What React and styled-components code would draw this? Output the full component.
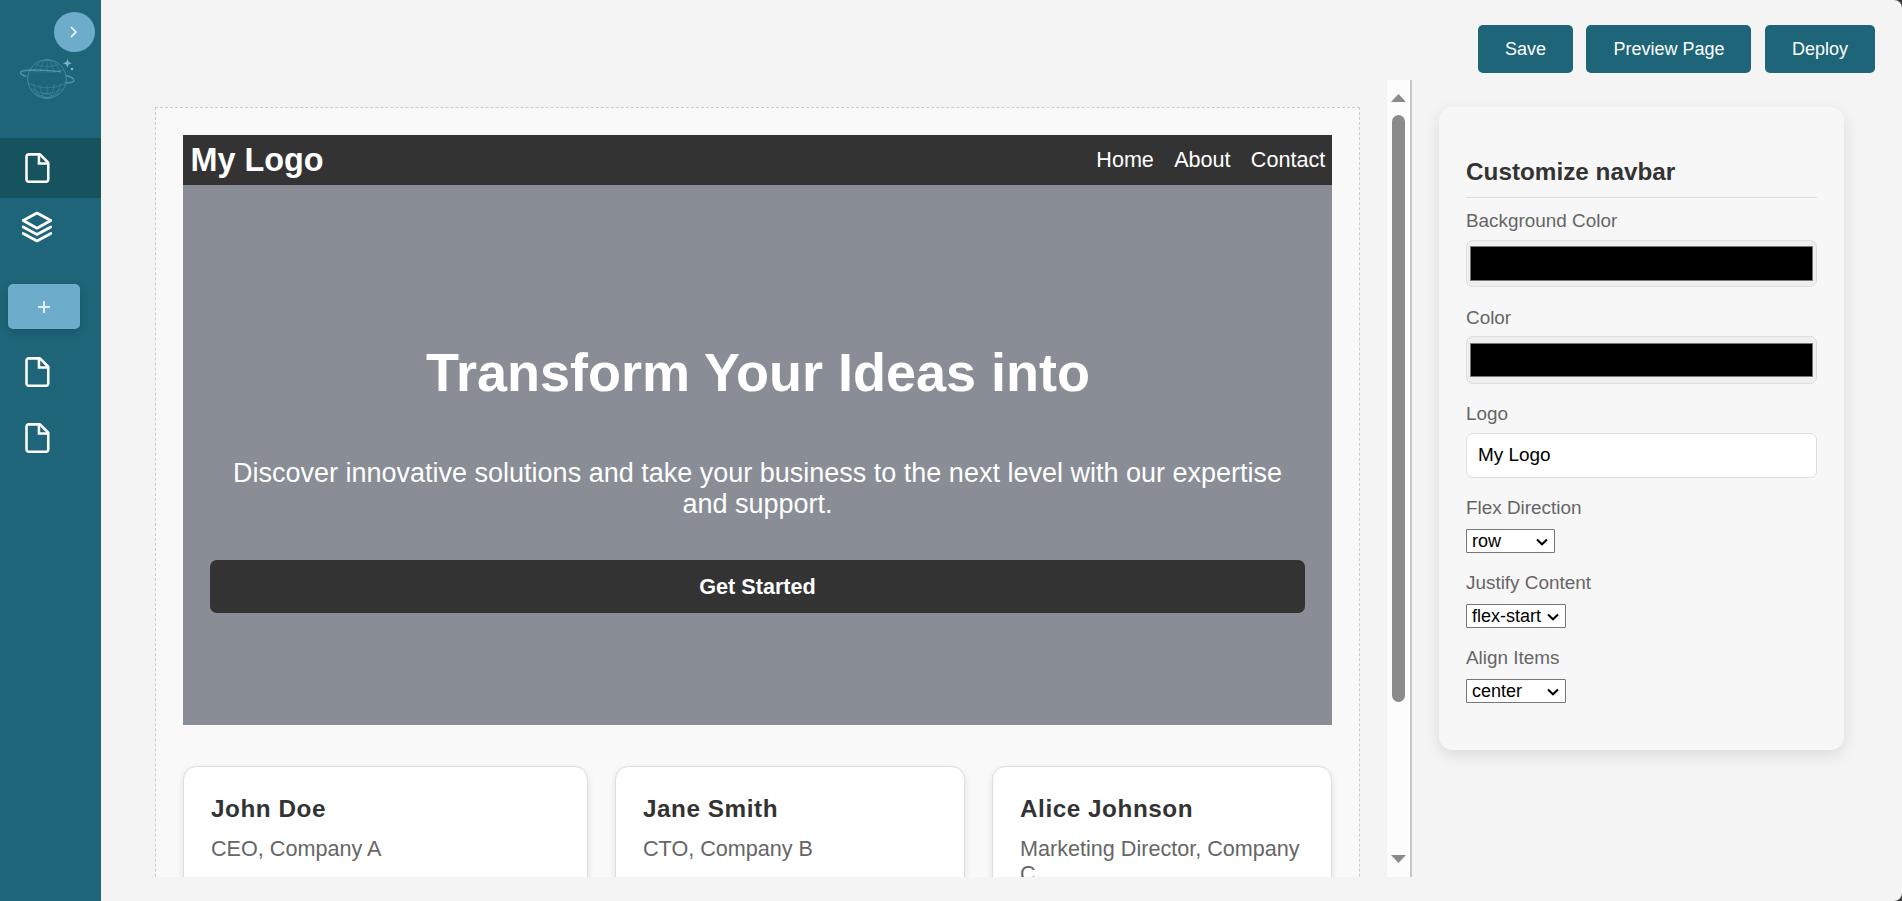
import React from 'react';
import styled, { createGlobalStyle } from 'styled-components';

const Global = createGlobalStyle`
  * { box-sizing: border-box; }
  html, body { margin: 0; height: 100%; background: #3b3b3b; }
  body, button, input { font-family: "Liberation Sans", Arial, sans-serif; }
  h1, h2, h3, p { margin: 0; }
`;

const Page = styled.div`
  display: flex;
  width: 100%;
  height: 901px;
  overflow: hidden;
  background: #f4f4f4;
  border-radius: 0 8px 8px 0;
`;

const Sidebar = styled.aside`
  display: flex;
  flex-direction: column;
  flex: none;
  width: 101px;
  background: #1e6579;
`;

const SidebarTop = styled.div`
  height: 138px;
  padding: 12px 6px 0 0;
`;

const Toggle = styled.button`
  display: flex;
  align-items: center;
  justify-content: center;
  width: 41px;
  height: 40px;
  margin: 0 0 0 auto;
  padding: 0 1px 0 0;
  border: 0;
  border-radius: 50%;
  background: #6dadcb;
`;

const Brand = styled.svg`
  display: block;
  width: 60px;
  height: 50px;
  margin: 2px 0 0 18px;
`;

const SideItem = styled.div`
  display: flex;
  align-items: center;
  height: ${(p) => p.$height}px;
  padding: 0 0 ${(p) => (p.$active ? 0 : 2)}px 19px;
  background: ${(p) => (p.$active ? '#17525f' : 'transparent')};
`;

const Icon = styled.svg`
  display: block;
  width: ${(p) => p.$size}px;
  height: ${(p) => p.$size}px;
  fill: none;
  stroke: #fff;
  stroke-width: ${(p) => p.$weight || 2};
  stroke-linecap: round;
  stroke-linejoin: round;
`;

const AddButton = styled.button`
  display: flex;
  align-items: center;
  justify-content: center;
  width: 72px;
  height: 45px;
  margin: 26px 0 11px 8px;
  padding: 1px 0 0;
  border: 0;
  border-radius: 5px;
  background: #6dadcb;
  box-shadow: 0 4px 8px rgba(0, 0, 0, 0.15);
`;

const Main = styled.main`
  display: flex;
  flex-direction: column;
  flex: 1;
  min-width: 0;
`;

const Toolbar = styled.header`
  display: flex;
  justify-content: flex-end;
  gap: 13.5px;
  height: 80px;
  padding: 25px 27px 0 0;
`;

const ActionButton = styled.button`
  height: 48px;
  padding: 1px 27px 0;
  border: 0;
  border-radius: 5px;
  background: #1e6579;
  color: #fff;
  font-size: 18px;
`;

const Workspace = styled.div`
  display: flex;
  align-items: flex-start;
  height: 797px;
`;

const Editor = styled.section`
  display: flex;
  width: 1311px;
  height: 797px;
  overflow: hidden;
  border-right: 2px solid #c8c8c8;
`;

const Viewport = styled.div`
  flex: 1;
  height: 797px;
  padding: 27px 27px 0 54px;
  overflow: hidden;
`;

const Canvas = styled.div`
  height: 900px;
  padding: 27px;
  border: 1px dashed #ccc;
  background: #f9f9f9;
`;

const Navbar = styled.nav`
  display: flex;
  align-items: center;
  justify-content: space-between;
  height: 50px;
  padding: 0 6.75px 0 7.5px;
  background: #333;
  color: #fff;
`;

const NavLogo = styled.div`
  font-size: 32.4px;
  font-weight: 700;
`;

const NavLinks = styled.div`
  display: flex;
  gap: 20.25px;
  font-size: 21.6px;
`;

const Hero = styled.div`
  display: flex;
  flex-direction: column;
  height: 540px;
  padding: 156px 27px 0;
  background: #898d95;
  color: #fff;
  text-align: center;
`;

const HeroTitle = styled.h1`
  padding-left: 1px;
  font-size: 54px;
  line-height: 62px;
`;

const HeroText = styled.p`
  margin: 55px 0 40px;
  font-size: 27px;
  line-height: 31px;
`;

const HeroButton = styled.button`
  height: 53px;
  padding: 0;
  border: 0;
  border-radius: 6.75px;
  background: #333;
  color: #fff;
  font-size: 21.6px;
  font-weight: 700;
`;

const Cards = styled.div`
  display: grid;
  grid-template-columns: 405px 350px 1fr;
  gap: 27px;
  margin-top: 41px;
`;

const Card = styled.article`
  height: 180px;
  padding: 28px 27px 0;
  border: 1px solid #ddd;
  border-radius: 13.5px;
  background: #fff;
  box-shadow: 0 3px 7px rgba(0, 0, 0, 0.1);
`;

const CardName = styled.h3`
  color: #333;
  font-size: 24.3px;
  line-height: 28px;
  letter-spacing: 0.54px;
`;

const CardRole = styled.p`
  margin-top: 13px;
  color: #666;
  font-size: 21.6px;
  line-height: 25px;
`;

const Scrollbar = styled.div`
  display: flex;
  flex-direction: column;
  align-items: center;
  justify-content: space-between;
  width: 23px;
  padding: 14px 0;
  background: #fcfcfc;
`;

const ScrollTrack = styled.div`
  flex: 1;
  padding-top: 13px;
`;

const ScrollThumb = styled.div`
  width: 13px;
  height: 587px;
  border-radius: 7px;
  background: #8b8b8b;
`;

const Arrow = styled.svg`
  display: block;
  width: 15px;
  height: 8px;
  fill: #8b8b8b;
`;

const Panel = styled.aside`
  width: 405px;
  height: 643px;
  margin: 27px 0 0 27px;
  padding: 49px 27px 0;
  border-radius: 13.5px;
  background: #f7f7f7;
  box-shadow: 0 5px 16px rgba(0, 0, 0, 0.1);
`;

const PanelTitle = styled.h2`
  height: 42px;
  margin-bottom: 12px;
  border-bottom: 1px solid #ddd;
  color: #333;
  font-size: 24.3px;
  line-height: 31px;
`;

const Field = styled.div`
  display: flex;
  flex-direction: column;
  align-items: flex-start;
  height: ${(p) => p.$height}px;
`;

const Label = styled.label`
  height: ${(p) => p.$height}px;
  color: #666;
  font-size: 18.9px;
  line-height: 22px;
`;

const ColorInput = styled.div`
  display: flex;
  width: 100%;
  height: ${(p) => p.$height}px;
  padding: ${(p) => p.$inset}px 3px;
  border: 1px solid #ddd;
  border-radius: 6.75px;
  background: #efefef;
`;

const Swatch = styled.div`
  flex: 1;
  border: 1px solid #777;
  background: #000;
`;

const TextInput = styled.input`
  width: 100%;
  height: 45px;
  padding: 0 11px 2px;
  border: 1px solid #ddd;
  border-radius: 6.75px;
  background: #fff;
  color: #000;
  font-size: 18.9px;
`;

const Select = styled.div`
  display: flex;
  align-items: center;
  justify-content: space-between;
  width: ${(p) => p.$width}px;
  height: 24px;
  padding: 0 6px 0 5px;
  border: 1px solid #767676;
  border-radius: 1px;
  background: #fff;
  color: #000;
  font-size: 18px;
  line-height: 22px;
`;

const Chevron = styled.svg`
  width: 12px;
  height: 8px;
  margin-top: 2px;
  fill: none;
  stroke: #000;
  stroke-width: 2;
`;

const FileIcon = () => (
  <Icon $size={36} $weight={1.7} viewBox="0 0 24 24">
    <path d="M14 2.9H6.5A1.5 1.5 0 0 0 5 4.4V19.6A1.5 1.5 0 0 0 6.5 21.1H18A1.5 1.5 0 0 0 19.5 19.6V8.5Z" />
    <path d="M13.3 3V9H19.2" strokeLinejoin="miter" />
  </Icon>
);

const LayersIcon = () => (
  <Icon $size={36} $weight={1.8} viewBox="0 0 24 24">
    <path d="M12 2.7 21.2 7.7 12 12.8 2.8 7.7Z" />
    <path d="M2.8 12 12 17 21.2 12" />
    <path d="M2.8 16.3 12 21.3 21.2 16.3" />
  </Icon>
);

const PlanetLogo = () => (
  <Brand viewBox="0 0 60 50" fill="none" stroke="#5d9cb4">
    <g strokeWidth="0.6" opacity="0.65">
      <circle cx="29" cy="25" r="19.3" strokeWidth="1" />
      <ellipse cx="29" cy="25" rx="14" ry="19.3" />
      <ellipse cx="29" cy="25" rx="7.5" ry="19.3" />
      <path d="M29 6V44M17 10Q29 15 41 10M12 16Q29 21 46 16M10 29Q29 39 48 29M13 35Q29 44 45 35M17 39Q29 46 41 39" />
    </g>
    <path d="M12 19Q29 17 46 20V29Q29 32 12 29Z" fill="#1e6579" stroke="none" />
    <ellipse cx="29" cy="41.5" rx="4.5" ry="1.8" fill="#1e6579" strokeWidth="0.5" />
    <path d="M8.5 22.5C0 20 0 16 12 16.2C25 15.5 33 17 43 17.5M48 21.5C58 24 59 29 48 29" strokeWidth="1.4" opacity="0.8" />
    <path d="M49.4 5 50.6 8 53.8 9.2 50.6 10.4 49.4 13.6 48.2 10.4 45 9.2 48.2 8Z" fill="#78b6d0" stroke="none" />
    <circle cx="54" cy="15" r="1.3" fill="#78b6d0" stroke="none" />
  </Brand>
);

const people = [
  ['John Doe', 'CEO, Company A'],
  ['Jane Smith', 'CTO, Company B'],
  ['Alice Johnson', 'Marketing Director, Company C'],
];

const selects = [
  ['Flex Direction', 'row', 89],
  ['Justify Content', 'flex-start', 100],
  ['Align Items', 'center', 100],
];

export default function App() {
  return (
    <>
      <Global />
      <Page>
        <Sidebar>
          <SidebarTop>
            <Toggle aria-label="Expand">
              <Icon $size={18} viewBox="0 0 18 18">
                <path d="M6.5 4.5 11 9 6.5 13.5" strokeWidth="1.6" />
              </Icon>
            </Toggle>
            <PlanetLogo />
          </SidebarTop>
          <SideItem $height={60} $active><FileIcon /></SideItem>
          <SideItem $height={60}><LayersIcon /></SideItem>
          <AddButton aria-label="Add">
            <Icon $size={12} viewBox="0 0 12 12">
              <path d="M6 0V12M0 6H12" strokeWidth="2" strokeLinecap="butt" opacity="0.8" />
            </Icon>
          </AddButton>
          <SideItem $height={66}><FileIcon /></SideItem>
          <SideItem $height={66}><FileIcon /></SideItem>
        </Sidebar>
        <Main>
          <Toolbar>
            <ActionButton>Save</ActionButton>
            <ActionButton>Preview Page</ActionButton>
            <ActionButton>Deploy</ActionButton>
          </Toolbar>
          <Workspace>
            <Editor>
              <Viewport>
                <Canvas>
                  <Navbar>
                    <NavLogo>My Logo</NavLogo>
                    <NavLinks>
                      <span>Home</span>
                      <span>About</span>
                      <span>Contact</span>
                    </NavLinks>
                  </Navbar>
                  <Hero>
                    <HeroTitle>Transform Your Ideas into</HeroTitle>
                    <HeroText>
                      Discover innovative solutions and take your business to the next level with our expertise and support.
                    </HeroText>
                    <HeroButton>Get Started</HeroButton>
                  </Hero>
                  <Cards>
                    {people.map(([name, role]) => (
                      <Card key={name}>
                        <CardName>{name}</CardName>
                        <CardRole>{role}</CardRole>
                      </Card>
                    ))}
                  </Cards>
                </Canvas>
              </Viewport>
              <Scrollbar>
                <Arrow viewBox="0 0 15 8"><path d="M0 8 7.5 0 15 8Z" /></Arrow>
                <ScrollTrack><ScrollThumb /></ScrollTrack>
                <Arrow viewBox="0 0 15 8"><path d="M0 0H15L7.5 8Z" /></Arrow>
              </Scrollbar>
            </Editor>
            <Panel>
              <PanelTitle>Customize navbar</PanelTitle>
              <Field $height={97}>
                <Label $height={30}>Background Color</Label>
                <ColorInput $height={47} $inset={5}><Swatch /></ColorInput>
              </Field>
              <Field $height={96}>
                <Label $height={29}>Color</Label>
                <ColorInput $height={48} $inset={6}><Swatch /></ColorInput>
              </Field>
              <Field $height={94}>
                <Label $height={30}>Logo</Label>
                <TextInput defaultValue="My Logo" />
              </Field>
              {selects.map(([label, value, width]) => (
                <Field key={label} $height={75}>
                  <Label $height={32}>{label}</Label>
                  <Select $width={width}>
                    {value}
                    <Chevron viewBox="0 0 12 8"><path d="M1 1.5 6 6.3 11 1.5" /></Chevron>
                  </Select>
                </Field>
              ))}
            </Panel>
          </Workspace>
        </Main>
      </Page>
    </>
  );
}
